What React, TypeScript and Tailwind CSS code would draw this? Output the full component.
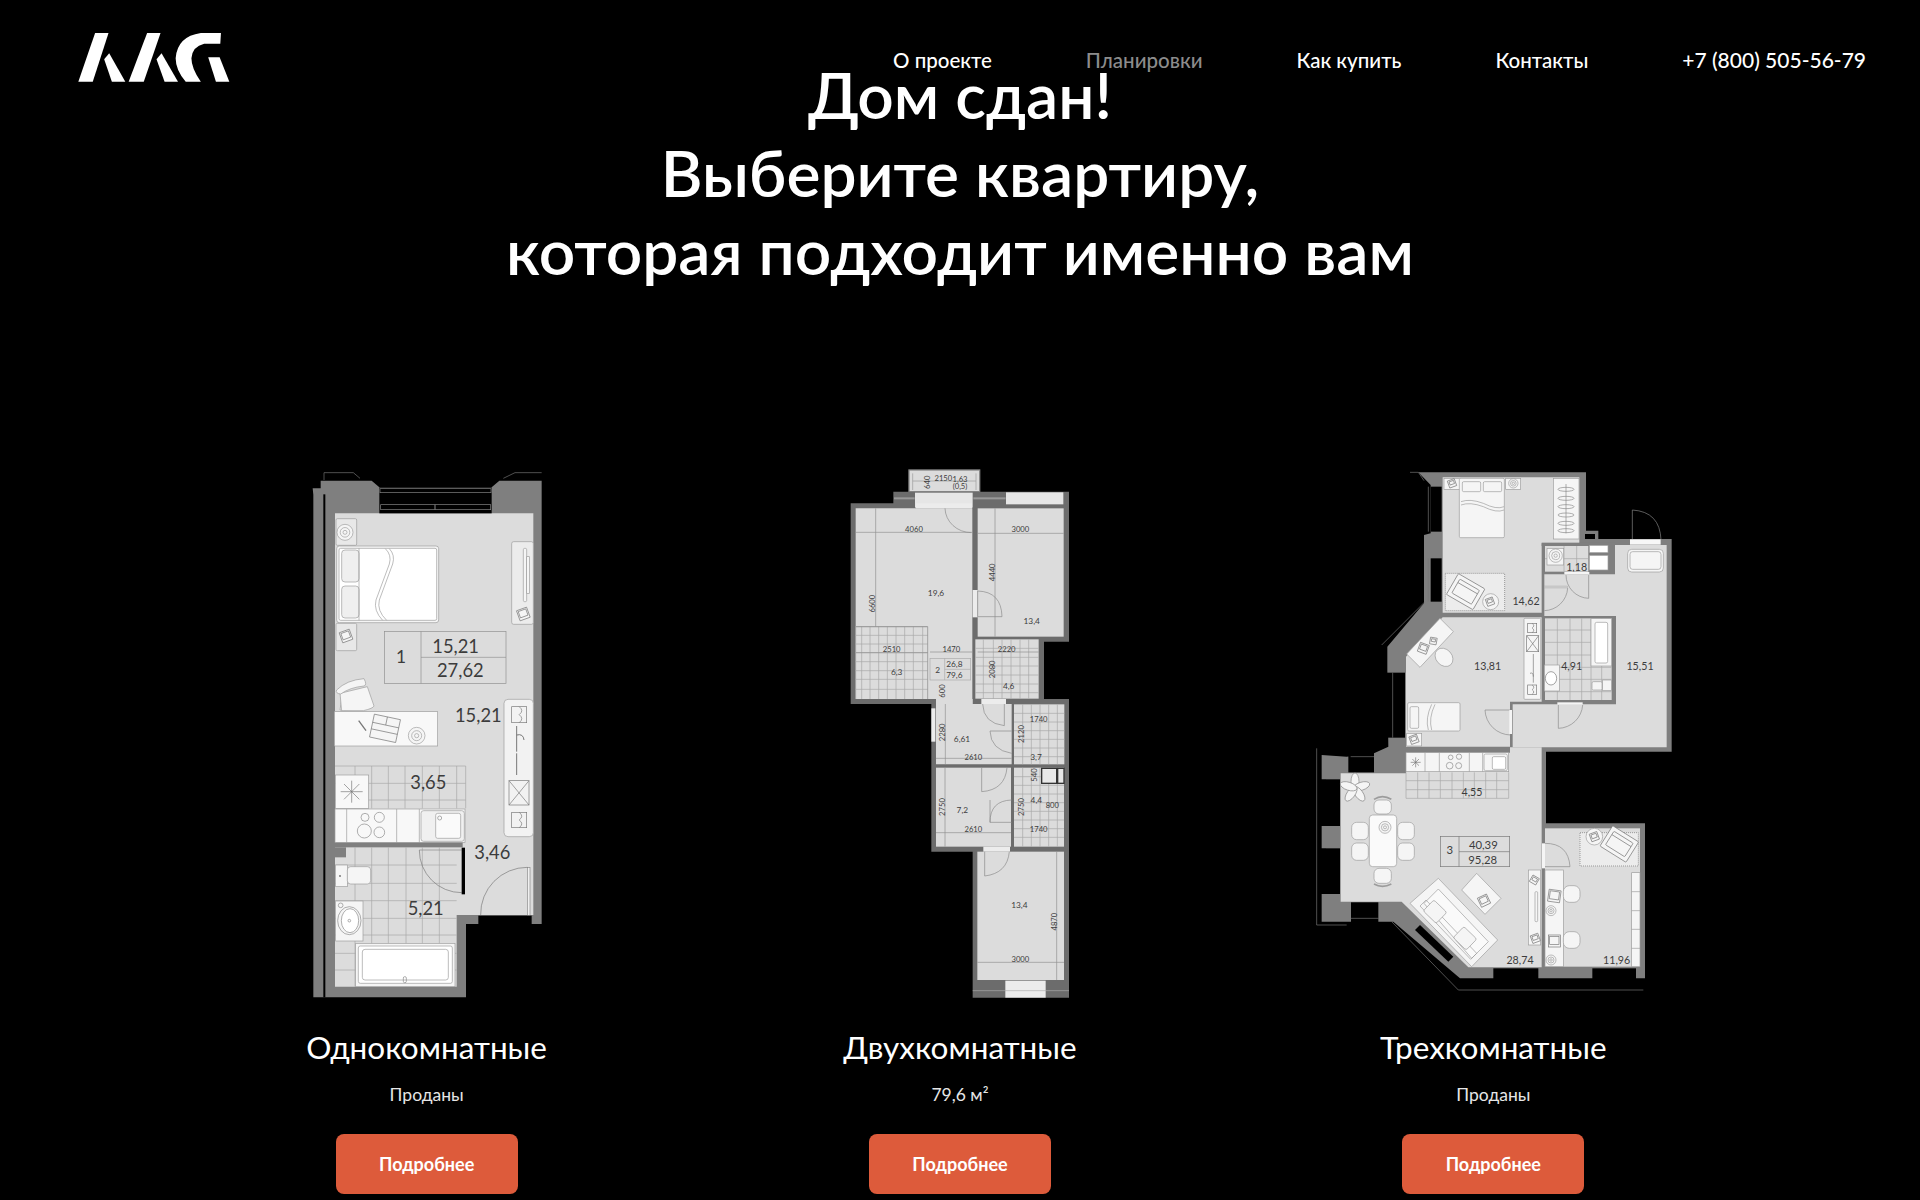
import type { ReactNode } from 'react';

const WALL = '#7f7f7f';
const WALL_DARK = '#6c6c6c';
const FLOOR = '#dcdcdc';
const LINE = '#9c9c9c';
const FURN = '#f5f5f5';
const INK = '#3c3c3c';

function Label({ x, y, size = 24, rot, children }: { x: number; y: number; size?: number; rot?: boolean; children: ReactNode }) {
    return (
        <text x={x} y={y} fontSize={size} fill={INK} textAnchor="middle" dominantBaseline="central" fontFamily="Lato, sans-serif" transform={rot ? `rotate(-90 ${x} ${y})` : undefined}>
            {children}
        </text>
    );
}

function Box({ x, y, w, h, r = 0, fill = FURN, stroke = LINE }: { x: number; y: number; w: number; h: number; r?: number; fill?: string; stroke?: string }) {
    return <rect x={x} y={y} width={w} height={h} rx={r} fill={fill} stroke={stroke} strokeWidth={2} />;
}

function Tiles({ x0, x1, y0, y1, xs, ys }: { x0: number; x1: number; y0: number; y1: number; xs: number[]; ys: number[] }) {
    return (
        <g stroke="#a8a8a8" strokeWidth={2}>
            {xs.map((x) => <line key={x} x1={x} x2={x} y1={y0} y2={y1} />)}
            {ys.map((y) => <line key={y} x1={x0} x2={x1} y1={y} y2={y} />)}
        </g>
    );
}

function Rings({ x, y, r }: { x: number; y: number; r: number }) {
    return (
        <g fill="none" stroke={LINE} strokeWidth={2}>
            <circle cx={x} cy={y} r={r} fill={FURN} />
            <circle cx={x} cy={y} r={r * 0.6} />
            <circle cx={x} cy={y} r={r * 0.25} />
        </g>
    );
}

function Book({ x, y, s = 30, a = -20 }: { x: number; y: number; s?: number; a?: number }) {
    return (
        <g transform={`rotate(${a} ${x} ${y})`} fill={FURN} stroke="#777" strokeWidth={2}>
            <rect x={x - s / 2} y={y - s / 2} width={s} height={s} />
            <rect x={x - s / 2 + 4} y={y - s / 2 + 4} width={s - 8} height={s - 12} />
        </g>
    );
}

function Door({ d, line }: { d: string; line: string }) {
    return <path d={`${d} ${line}`} fill="none" stroke="#8a8a8a" strokeWidth={2} />;
}

function Boots({ x, y, w, h }: { x: number; y: number; w: number; h: number }) {
    return (
        <g fill="none" stroke="#777" strokeWidth={2}>
            <rect x={x} y={y} width={w} height={h} />
            <path d={`M${x + w * 0.5} ${y} q${w * 0.35} ${h * 0.25} 0 ${h * 0.5} q${w * 0.35} ${h * 0.25} 0 ${h * 0.5}`} />
        </g>
    );
}

function StudioPlan() {
    return (
        <svg viewBox="0 0 819 1650" className="w-[273px] h-[550px]">
            <path d="M102 60V38H190L210 55M755 38H675L640 55" fill="none" stroke="#777" strokeWidth={2} />
            <polygon fill={WALL} points="70,104 68,85 92,85 92,62 245,62 268,82 605,82 628,62 755,62 755,1392 528,1392 528,1612 70,1612" />
            <polygon fill={FLOOR} points="135,160 730,160 730,1365 500,1365 500,1580 135,1580" />
            <rect x={100} y={103} width={6} height={1509} fill="#000" />
            <rect x={268} y={82} width={337} height={78} fill="#000" />
            <rect x={270} y={86} width={333} height={12} fill="none" stroke="#888" strokeWidth={2} />
            <rect x={272} y={134} width={330} height={15} fill="none" stroke="#888" strokeWidth={2} />
            <line x1={435} x2={435} y1={134} y2={149} stroke="#888" strokeWidth={3} />

            <Box x={138} y={176} w={62} h={80} r={4} fill="#e8e8e8" />
            <Rings x={165} y={217} r={24} />
            <Box x={140} y={258} w={306} h={230} r={8} />
            <rect x={147} y={265} width={293} height={216} rx={5} fill="#fff" stroke={LINE} strokeWidth={2} />
            <Box x={155} y={270} w={52} h={96} r={10} fill="#efefef" />
            <Box x={155} y={378} w={52} h={96} r={10} fill="#efefef" />
            <line x1={207} x2={207} y1={265} y2={481} stroke={LINE} strokeWidth={2} />
            <path d="M286 266Q306 285 298 312L258 420Q250 452 278 481M298 266Q316 285 308 312L268 420Q260 452 290 481" fill="none" stroke={LINE} strokeWidth={2} />
            <Box x={138} y={490} w={62} h={82} r={4} fill="#e8e8e8" />
            <Book x={168} y={528} s={32} />
            <Box x={665} y={245} w={65} h={248} r={6} fill="#ececec" />
            <Box x={700} y={265} w={10} h={160} r={4} />
            <Box x={710} y={290} w={8} h={110} />
            <Book x={700} y={462} s={32} />

            <g fill="none" stroke="#8f8f8f" strokeWidth={2}>
                <rect x={283} y={514} width={365} height={156} />
                <path d="M393 514V670M393 592H648" />
            </g>
            <Label x={333} y={590} size={52}>1</Label>
            <Label x={497} y={557} size={55}>15,21</Label>
            <Label x={511} y={630} size={55}>27,62</Label>

            <path d="M150 750Q156 715 152 700L248 735Q240 745 160 752Z" fill={FURN} stroke={LINE} strokeWidth={2} />
            <path d="M150 700L155 752H220Q250 745 252 738L232 680Z" fill={FURN} stroke={LINE} strokeWidth={2} />
            <path d="M140 690Q170 660 222 656Q232 675 222 678Q180 682 152 702Q135 700 140 690Z" fill={FURN} stroke={LINE} strokeWidth={2} />
            <Box x={133} y={755} w={310} h={103} fill="#f8f8f8" />
            <line x1={206} y1={782} x2={228} y2={812} stroke="#777" strokeWidth={4} />
            <g transform="rotate(12 285 805)" fill={FURN} stroke="#777" strokeWidth={2}>
                <rect x={245} y={770} width={80} height={70} />
                <path d="M245 795H325M245 815H325M285 770V795" />
            </g>
            <Rings x={380} y={827} r={25} />
            <Label x={565} y={765} size={55}>15,21</Label>

            <Box x={642} y={718} w={88} h={412} r={12} fill="#f2f2f2" />
            <Boots x={665} y={740} w={45} h={48} />
            <path d="M680 798V875M680 825Q700 820 702 840M680 880V945" fill="none" stroke="#777" strokeWidth={3} />
            <rect x={657} y={962} width={60} height={73} fill="none" stroke="#777" strokeWidth={2} />
            <path d="M657 962L717 1035M717 962L657 1035" stroke="#777" strokeWidth={2} />
            <Boots x={665} y={1057} w={45} h={46} />

            <g transform="translate(0 870)">
                <Tiles x0={135} x1={527} y0={48} y1={175} xs={[195, 245, 295, 345, 397, 448, 500, 527]} ys={[48, 100, 150]} />
                <Box x={136} y={75} w={100} h={100} fill="#f8f8f8" />
                <path d="M152 125H218M185 92V158M162 102L208 148M208 102L162 148" stroke="#777" strokeWidth={2} />
                <Box x={135} y={177} w={390} h={100} fill="#f8f8f8" />
                <path d="M170 177V277M320 177V277M388 177V277" stroke={LINE} strokeWidth={2} />
                <g fill="none" stroke="#888" strokeWidth={2}>
                    <circle cx={225} cy={202} r={12} />
                    <circle cx={268} cy={202} r={15} />
                    <circle cx={223} cy={243} r={21} />
                    <circle cx={268} cy={247} r={16} />
                </g>
                <Box x={393} y={182} w={130} h={92} r={8} fill="#f0f0f0" />
                <Box x={437} y={190} w={75} h={75} r={6} fill="#fafafa" />
                <circle cx={449} cy={204} r={6} fill="none" stroke="#888" strokeWidth={2} />
                <Label x={415} y={97} size={55}>3,65</Label>

                <rect x={135} y={278} width={383} height={14} fill={WALL} />
                <rect x={135} y={292} width={33} height={30} fill={WALL} />
                <Tiles x0={135} x1={500} y0={292} y1={710} xs={[195, 245, 295, 348, 397, 448]} ys={[345, 400, 452, 505, 555, 610, 660]} />
                <path d="M388 300H515" stroke="#888" strokeWidth={2} />
                <path d="M388 300A127 127 0 0 0 515 428" fill="none" stroke="#777" strokeWidth={2} />
                <rect x={515} y={293} width={10} height={140} fill="#000" />
                <Box x={137} y={345} w={35} h={65} />
                <Box x={172} y={350} w={70} h={52} r={10} />
                <circle cx={150} cy={378} r={2.5} fill="#222" />
                <Box x={137} y={453} w={82} h={120} />
                <ellipse cx={178} cy={512} rx={35} ry={42} fill={FURN} stroke="#888" strokeWidth={2} />
                <ellipse cx={180} cy={512} rx={26} ry={36} fill="#fff" stroke="#888" strokeWidth={2} />
                <circle cx={178} cy={512} r={4} fill="none" stroke="#888" strokeWidth={2} />
                <circle cx={152} cy={466} r={7} fill="none" stroke="#888" strokeWidth={2} />
                <Box x={197} y={580} w={298} h={130} />
                <Box x={205} y={588} w={282} h={112} r={6} fill="#fff" />
                <Box x={217} y={598} w={258} h={92} r={8} fill="#fff" />
                <rect x={340} y={680} width={9} height={18} rx={4} fill="none" stroke="#888" strokeWidth={2} />
                <Label x={407} y={475} size={55}>5,21</Label>
                <Label x={607} y={307} size={55}>3,46</Label>
                <rect x={712} y={352} width={8} height={145} fill="#f0f0f0" stroke="#888" strokeWidth={2} />
                <path d="M712 352A140 140 0 0 0 572 495" fill="none" stroke="#777" strokeWidth={2} />
                <rect x={565} y={497} width={160} height={25} fill="#000" />
            </g>
        </svg>
    );
}

function TwoRoomPlan() {
    return (
        <svg viewBox="0 0 780 1650" className="w-[260px] h-[550px]">
            <rect x={237} y={30} width={212} height={65} fill={FLOOR} stroke="#8a8a8a" strokeWidth={4} />
            <path d="M248 40V90M248 63H438M438 40V90" stroke={LINE} strokeWidth={2} />
            <polygon fill={WALL_DARK} points="62,130 190,130 190,95 717,95 717,545 642,545 642,717 717,717 717,1613 428,1613 428,1175 304,1175 304,732 62,732" />
            <rect x={255} y={98} width={173} height={45} fill="#e6e6e6" />
            <rect x={528} y={97} width={172} height={36} fill="#e6e6e6" />
            <rect x={192} y={112} width={62} height={6} fill="#999" />
            <rect x={430} y={112} width={97} height={6} fill="#999" />
            <polygon fill={FLOOR} points="77,145 427,145 427,732 318,732 318,717 77,717" />
            <rect x={443} y={145} width={258} height={385} fill={FLOOR} />
            <rect x={436} y={538} width={190} height={178} fill={FLOOR} />
            <polygon fill={FLOOR} points="318,717 428,717 428,732 545,732 545,913 318,913" />
            <rect x={552} y={733} width={151} height={180} fill={FLOOR} />
            <rect x={318} y={923} width={225} height={237} fill={FLOOR} />
            <rect x={552} y={923} width={150} height={237} fill={FLOOR} />
            <rect x={442} y={1175} width={260} height={385} fill={FLOOR} />
            <rect x={526} y={1562} width={121} height={51} fill="#ececec" />
            <line x1={428} x2={717} y1={1592} y2={1592} stroke="#aaa" strokeWidth={2} />
            <rect x={460} y={1160} width={80} height={15} fill="#ececec" />
            <rect x={428} y={390} width={15} height={82} fill="#ececec" />
            <rect x={454} y={717} width={74} height={15} fill="#ececec" />
            <rect x={304} y={745} width={12} height={100} fill="#ececec" />
            <rect x={258} y={130} width={168} height={15} fill="#ececec" />

            <Tiles x0={77} x1={293} y0={500} y1={717} xs={[77, 95, 120, 146, 172, 198, 224, 250, 278]} ys={[500, 526, 552, 578, 605, 632, 658, 688]} />
            <line x1={293} x2={293} y1={500} y2={717} stroke="#888" strokeWidth={2} />
            <line x1={77} x2={293} y1={500} y2={500} stroke="#888" strokeWidth={2} />
            <Tiles x0={436} x1={626} y0={538} y1={716} xs={[460, 490, 516, 543, 570, 596]} ys={[565, 592, 618, 645, 672, 698]} />
            <Tiles x0={552} x1={703} y0={733} y1={913} xs={[578, 604, 630, 656, 682]} ys={[760, 786, 812, 838, 864, 890]} />
            <Tiles x0={552} x1={702} y0={923} y1={1160} xs={[578, 604, 630, 656, 682]} ys={[950, 976, 1002, 1028, 1054, 1080, 1106, 1132]} />
            <g stroke="#8f8f8f" strokeWidth={2} fill="none">
                <path d="M77 217H427M443 220H701M137 145V500M495 145V530M300 576H427M443 576H626M77 578H293" />
                <path d="M346 732V913M318 895H545M318 1118H543M345 923V1160M442 1507H702M680 1175V1560" />
            </g>
            <rect x={300} y={595} width={122} height={65} fill={FLOOR} stroke="#aaa" strokeWidth={2} />
            <path d="M344 595V660M344 628H422" stroke="#aaa" strokeWidth={2} />

            <Door d="M345 145A80 75 0 0 0 424 218" line="" />
            <Door d="M443 393Q514 395 516 470" line="M443 393V470H516" />
            <Door d="M458 732Q460 790 523 797" line="M523 732V797" />
            <Door d="M480 813Q482 870 545 880" line="M480 813H545" />
            <Door d="M455 923V995Q525 990 531 923" line="" />
            <Door d="M480 1087Q480 1022 545 1020" line="M480 1020V1087H545" />
            <Door d="M464 1175V1248Q532 1240 538 1175" line="" />
            <rect x={635} y={925} width={45} height={45} fill="#e8e8e8" stroke="#333" strokeWidth={4} />
            <rect x={683} y={925} width={19} height={45} fill="#e8e8e8" stroke="#333" strokeWidth={4} />

            <Label x={340} y={55} size={23}>2150</Label>
            <Label x={390} y={58} size={23}>1,63</Label>
            <Label x={390} y={78} size={23}>(0,5)</Label>
            <Label x={291} y={67} size={23} rot>640</Label>
            <Label x={252} y={208} size={23}>4060</Label>
            <Label x={571} y={208} size={23}>3000</Label>
            <Label x={487} y={337} size={23} rot>4440</Label>
            <Label x={318} y={398} size={25}>19,6</Label>
            <Label x={126} y={431} size={23} rot>6600</Label>
            <Label x={605} y={484} size={25}>13,4</Label>
            <Label x={185} y={568} size={23}>2510</Label>
            <Label x={364} y={568} size={23}>1470</Label>
            <Label x={530} y={568} size={23}>2220</Label>
            <Label x={200} y={637} size={25}>6,3</Label>
            <Label x={323} y={630} size={25}>2</Label>
            <Label x={373} y={612} size={25}>26,8</Label>
            <Label x={373} y={645} size={25}>79,6</Label>
            <Label x={487} y={628} size={23} rot>2080</Label>
            <Label x={536} y={678} size={25}>4,6</Label>
            <Label x={337} y={693} size={23} rot>600</Label>
            <Label x={626} y={778} size={23}>1740</Label>
            <Label x={336} y={817} size={23} rot>2280</Label>
            <Label x={572} y={822} size={23} rot>2120</Label>
            <Label x={396} y={838} size={25}>6,61</Label>
            <Label x={430} y={890} size={23}>2610</Label>
            <Label x={618} y={890} size={25}>3,7</Label>
            <Label x={611} y={945} size={23} rot>540</Label>
            <Label x={336} y={1041} size={23} rot>2750</Label>
            <Label x={397} y={1051} size={25}>7,2</Label>
            <Label x={572} y={1041} size={23} rot>2750</Label>
            <Label x={619} y={1020} size={25}>4,4</Label>
            <Label x={667} y={1034} size={23}>800</Label>
            <Label x={430} y={1108} size={23}>2610</Label>
            <Label x={626} y={1106} size={23}>1740</Label>
            <Label x={568} y={1336} size={25}>13,4</Label>
            <Label x={673} y={1385} size={23} rot>4870</Label>
            <Label x={571} y={1498} size={23}>3000</Label>
        </svg>
    );
}

function Armchair({ x, y, a }: { x: number; y: number; a: number }) {
    return (
        <g transform={`rotate(${a} ${x} ${y})`} fill={FURN} stroke="#777" strokeWidth={2}>
            <rect x={x - 46} y={y - 36} width={92} height={72} rx={3} />
            <rect x={x - 34} y={y - 24} width={68} height={48} rx={3} />
            <path d={`M${x - 34} ${y - 12}H${x + 34}`} />
        </g>
    );
}

function ChairTop({ x, y, w, h, r = 15 }: { x: number; y: number; w: number; h: number; r?: number }) {
    return <Box x={x} y={y} w={w} h={h} r={r} />;
}

function ThreeRoomPlan() {
    return (
        <svg viewBox="0 0 1161 1650" className="w-[387px] h-[550px]">
            <polygon fill={WALL} points="355,37 858,37 858,212 895,212 895,237 1115,237 1115,875 738,875 738,1090 1035,1090 1035,1555 480,1555 280,1385 65,1385 65,1302 78,1302 78,1165 65,1165 65,1098 78,1098 78,958 65,958 65,885 140,890 222,880 265,860 262,630 262,560 372,430 372,225 392,220 392,75" />
            <polygon fill={FLOOR} points="428,52 838,52 838,250 725,250 725,458 428,458" />
            <polygon fill={FLOOR} points="428,472 725,472 725,725 630,725 630,860 318,860 318,590" />
            <polygon fill={FLOOR} points="945,255 1100,255 1100,862 638,862 638,733 948,733 948,468 733,468 733,343 945,343" />
            <polygon fill={FLOOR} points="122,940 318,940 318,878 630,878 630,862 725,862 725,1522 505,1522 305,1325 122,1325" />
            <rect x={735} y={1105} width={285} height={415} fill={FLOOR} />
            <rect x={735} y={258} width={130} height={77} fill={FLOOR} />
            <rect x={735} y={475} width={200} height={245} fill={FLOOR} />

            <g fill="#000">
                <rect x={392} y={80} width={33} height={135} />
                <rect x={392} y={295} width={33} height={130} />
                <rect x={260} y={638} width={55} height={195} />
                <rect x={145} y={878} width={77} height={59} />
                <rect x={78} y={958} width={42} height={140} />
                <rect x={78} y={1165} width={42} height={137} />
                <rect x={153} y={1327} width={82} height={60} />
                <polygon points="360,1395 460,1490 445,1505 345,1410" />
                <rect x={580} y={1525} width={135} height={37} />
                <rect x={877} y={1525} width={131} height={37} />
                <rect x={855} y={222} width={30} height={15} />
            </g>
            <path d="M330 37H355L372 62M385 80V215M385 295V425M245 555L375 425M278 638V833M50 865V1395H140M275 1385L475 1590H1030M152 1375H236M152 890H222" fill="none" stroke="#777" strokeWidth={2} />

            <Box x={432} y={55} w={50} h={33} />
            <Book x={456} y={70} s={22} />
            <Box x={478} y={55} w={135} h={178} r={4} />
            <Box x={487} y={65} w={55} h={30} r={4} />
            <Box x={550} y={65} w={55} h={30} r={4} />
            <path d="M483 125Q510 115 550 130Q590 150 612 140M483 135Q510 125 550 140Q590 160 612 150" fill="none" stroke={LINE} strokeWidth={2} />
            <Box x={617} y={55} w={45} h={33} />
            <Rings x={640} y={70} r={14} />
            <Box x={760} y={55} w={77} h={182} />
            <line x1={798} x2={798} y1={72} y2={220} stroke="#888" strokeWidth={2} />
            {[88, 115, 140, 165, 190, 212].map((y) => (
                <ellipse key={y} cx={798} cy={y} rx={24} ry={6} fill="none" stroke="#888" strokeWidth={2} />
            ))}
            <rect x={436} y={340} width={178} height={112} fill="#ececec" stroke="#999" strokeWidth={3} strokeDasharray="3 3" />
            <Armchair x={497} y={395} a={30} />
            <circle cx={572} cy={425} r={24} fill={FURN} stroke={LINE} strokeWidth={2} />
            <Book x={570} y={425} s={22} />

            <rect x={725} y={248} width={220} height={10} fill={WALL} />
            <Tiles x0={735} x1={865} y0={258} y1={335} xs={[792, 830]} ys={[296]} />
            <Box x={741} y={265} w={50} h={50} />
            <Rings x={767} y={287} r={20} />
            <Box x={868} y={256} w={56} h={22} fill="#fff" />
            <Box x={868} y={286} w={56} h={44} fill="#fff" />
            <Label x={830} y={318} size={32}>1,18</Label>
            <rect x={793} y={336} width={75} height={7} fill="#f5f5f5" />
            <Door d="M798 345A70 70 0 0 0 866 415" line="M866 345V415" />
            <rect x={733} y={378} width={70} height={6} fill="#cfcfcf" stroke={LINE} strokeWidth={1} />
            <Door d="M803 384A72 72 0 0 1 733 452" line="" />
            <Label x={678} y={422} size={32}>14,62</Label>

            <Door d="M997 238V150Q1080 155 1083 240" line="" />
            <rect x={990} y={238} width={92} height={16} fill="#f7f7f7" />
            <Box x={983} y={268} w={107} h={68} r={12} />
            <Box x={990} y={275} w={93} h={53} r={8} />

            <polygon points="420,475 460,515 360,622 320,582" fill={FURN} stroke={LINE} strokeWidth={2} />
            <Book x={370} y={565} s={28} a={20} />
            <Book x={400} y={543} s={20} a={10} />
            <ellipse cx={432} cy={592} rx={24} ry={30} fill={FURN} stroke={LINE} strokeWidth={2} transform="rotate(-42 432 592)" />
            <Box x={672} y={475} w={50} h={243} r={3} />
            <Boots x={683} y={490} w={27} h={28} />
            <rect x={680} y={527} width={36} height={48} fill="none" stroke="#777" strokeWidth={2} />
            <path d="M680 527L716 575M716 527L680 575M700 582V668M690 640Q700 636 700 650" fill="none" stroke="#777" strokeWidth={2} />
            <Boots x={683} y={675} w={27} h={28} />
            <Box x={323} y={728} w={157} h={85} r={4} />
            <Box x={330} y={740} w={26} h={65} r={4} />
            <path d="M405 733Q385 775 395 810M395 733Q375 775 385 810" fill="none" stroke={LINE} strokeWidth={2} />
            <Box x={320} y={820} w={45} h={38} />
            <Book x={342} y={838} s={24} />
            <Label x={563} y={615} size={32}>13,81</Label>
            <Door d="M555 750H632M555 750A78 78 0 0 0 632 825" line="" />
            <rect x={628} y={750} width={8} height={72} fill="#f5f5f5" />

            <Tiles x0={735} x1={935} y0={475} y1={720} xs={[772, 810, 845, 873, 905]} ys={[510, 547, 585, 622, 658, 695]} />
            <Box x={873} y={476} w={62} h={142} />
            <Box x={885} y={487} w={38} h={122} r={5} fill="#fff" />
            <Box x={733} y={615} w={45} h={78} />
            <ellipse cx={753} cy={655} rx={17} ry={20} fill="#fff" stroke="#777" strokeWidth={2} />
            <Box x={876} y={665} w={30} h={25} r={4} />
            <Box x={908} y={660} w={26} h={32} />
            <Label x={815} y={615} size={32}>4,91</Label>
            <Label x={1020} y={615} size={32}>15,51</Label>
            <rect x={772} y={727} width={76} height={7} fill="#f5f5f5" />
            <Door d="M775 735V805A75 75 0 0 0 848 735" line="" />

            <g transform="translate(0 840)">
                <Box x={318} y={38} w={308} h={57} />
                <path d="M375 38V95M418 38V95M508 38V95M548 38V95" stroke={LINE} strokeWidth={2} />
                <path d="M332 67H362M347 52V82M337 57L357 77M357 57L337 77" stroke="#777" strokeWidth={2} />
                <g fill="none" stroke="#888" strokeWidth={2}>
                    <circle cx={452} cy={52} r={7} />
                    <circle cx={477} cy={50} r={8} />
                    <circle cx={449} cy={77} r={10} />
                    <circle cx={476} cy={77} r={9} />
                </g>
                <Box x={552} y={42} w={70} h={50} r={5} />
                <Box x={577} y={50} w={40} h={38} r={4} fill="#fff" />
                <Tiles x0={318} x1={626} y0={97} y1={175} xs={[318, 353, 387, 421, 456, 490, 523, 557, 590, 626]} ys={[122, 149, 175]} />
                <Label x={516} y={153} size={32}>4,55</Label>

                <g fill={FURN} stroke="#888" strokeWidth={2}>
                    {[0, 72, 144, 216, 288].map((a) => (
                        <ellipse key={a} cx={165} cy={125} rx={12} ry={26} transform={`rotate(${a} 165 145)`} />
                    ))}
                </g>
                <Box x={208} y={225} w={82} h={155} r={10} fill="#fafafa" />
                <Rings x={255} y={262} r={18} />
                <ChairTop x={222} y={180} w={52} h={42} />
                <path d="M222 178Q247 162 274 178" fill="none" stroke={LINE} strokeWidth={5} />
                <ChairTop x={155} y={247} w={50} h={52} />
                <ChairTop x={155} y={309} w={50} h={52} />
                <ChairTop x={293} y={247} w={50} h={52} />
                <ChairTop x={293} y={309} w={50} h={52} />
                <ChairTop x={222} y={385} w={52} h={45} />
                <path d="M222 432Q247 446 274 432" fill="none" stroke={LINE} strokeWidth={5} />

                <g fill="none" stroke="#777" strokeWidth={2}>
                    <rect x={421} y={289} width={208} height={91} />
                    <path d="M477 289V380M477 335H629" />
                </g>
                <Label x={449} y={328} size={34}>3</Label>
                <Label x={550} y={313} size={34}>40,39</Label>
                <Label x={548} y={358} size={34}>95,28</Label>

                <polygon points="415,415 593,600 515,680 330,490" fill={FURN} stroke={LINE} strokeWidth={2} />
                <polygon points="372,490 415,447 565,605 515,655" fill="#fafafa" stroke={LINE} strokeWidth={2} />
                <polygon points="360,498 378,480 530,640 512,658" fill="none" stroke={LINE} strokeWidth={2} />
                <g transform="rotate(44 405 515)"><Box x={378} y={492} w={54} h={46} r={6} /></g>
                <g transform="rotate(44 495 595)"><Box x={468} y={572} w={54} h={46} r={6} /></g>
                <polygon points="530,400 603,475 555,523 485,450" fill={FURN} stroke={LINE} strokeWidth={2} />
                <Book x={552} y={482} s={30} a={-25} />

                <Box x={685} y={390} w={37} h={225} />
                <Box x={705} y={455} w={8} h={90} r={3} />
                <Book x={703} y={420} s={22} a={30} />
                <Book x={706} y={595} s={24} />
                <rect x={726} y={310} width={9} height={75} fill="#f5f5f5" />
                <Door d="M735 310Q805 310 810 380" line="M735 380H810" />

                <Box x={735} y={390} w={55} h={290} />
                <Book x={763} y={468} s={36} a={8} />
                <Book x={763} y={603} s={36} a={0} />
                <Rings x={753} y={512} r={15} />
                <Rings x={753} y={660} r={15} />
                <ChairTop x={790} y={437} w={50} h={50} r={18} />
                <ChairTop x={790} y={575} w={50} h={50} r={18} />
                <rect x={840} y={278} width={175} height={100} fill="#ececec" stroke="#999" strokeWidth={3} strokeDasharray="3 3" />
                <Armchair x={958} y={312} a={32} />
                <circle cx={883} cy={290} r={25} fill={FURN} stroke={LINE} strokeWidth={2} />
                <Book x={883} y={290} s={24} />
                <Box x={995} y={398} w={25} h={282} />
                <path d="M995 455H1020M995 512H1020M995 568H1020M995 625H1020" stroke={LINE} strokeWidth={2} />
                <Label x={660} y={658} size={32}>28,74</Label>
                <Label x={950} y={658} size={32}>11,96</Label>
            </g>
        </svg>
    );
}

function PlanCard({ title, note, plan }: { title: string; note: string; plan: ReactNode }) {
    return (
        <div className="flex flex-col items-center">
            {plan}
            <h2 className="mt-[17px] text-[31.5px] leading-[40px] text-white">{title}</h2>
            <p className="mt-[14px] text-[17.5px] leading-[28px] text-[#e6e6e6]">{note}</p>
            <button className="mt-[25px] w-[182px] h-[60px] rounded-lg bg-[#dd5b3b] text-[18px] font-bold text-white">
                Подробнее
            </button>
        </div>
    );
}

export default function App() {
    return (
        <div className="min-h-screen bg-black text-white font-['Lato',sans-serif]">
            <header className="flex justify-between h-[82px] pt-[33px] pl-[78px] pr-[54px]">
                <svg viewBox="55 40 451 146" className="w-[152px] h-[49px]" fill="#fff">
                    <polygon points="105,40 145,40 98,185 55,185" />
                    <polygon points="132,118 147,100 195,185 155,185" />
                    <polygon points="260,40 300,40 250,185 205,185" />
                    <polygon points="288,118 303,100 352,185 312,185" />
                    <path d="M480 40L478 72L430 72Q395 80 392 115Q392 145 420 185L375 185Q345 150 345 115Q350 50 420 40Z" />
                    <polygon points="442,112 476,112 505,185 465,185" />
                </svg>
                <nav className="flex gap-[94px] h-[28px] mt-[13px] text-[20.5px] leading-[28px] font-medium">
                    <a>О проекте</a>
                    <a className="text-[#8c8c8c]">Планировки</a>
                    <a>Как купить</a>
                    <a>Контакты</a>
                    <a className="text-[21px]">+7 (800) 505-56-79</a>
                </nav>
            </header>
            <h1 className="-mt-[26px] text-center text-[64px] leading-[78px] font-semibold">
                Дом сдан!
                <br />
                Выберите квартиру,
                <br />
                которая подходит именно вам
            </h1>
            <main className="grid grid-cols-3 w-[1600px] mx-auto mt-[170px]">
                <PlanCard title="Однокомнатные" note="Проданы" plan={<StudioPlan />} />
                <PlanCard title="Двухкомнатные" note="79,6 м²" plan={<TwoRoomPlan />} />
                <PlanCard title="Трехкомнатные" note="Проданы" plan={<ThreeRoomPlan />} />
            </main>
        </div>
    );
}
